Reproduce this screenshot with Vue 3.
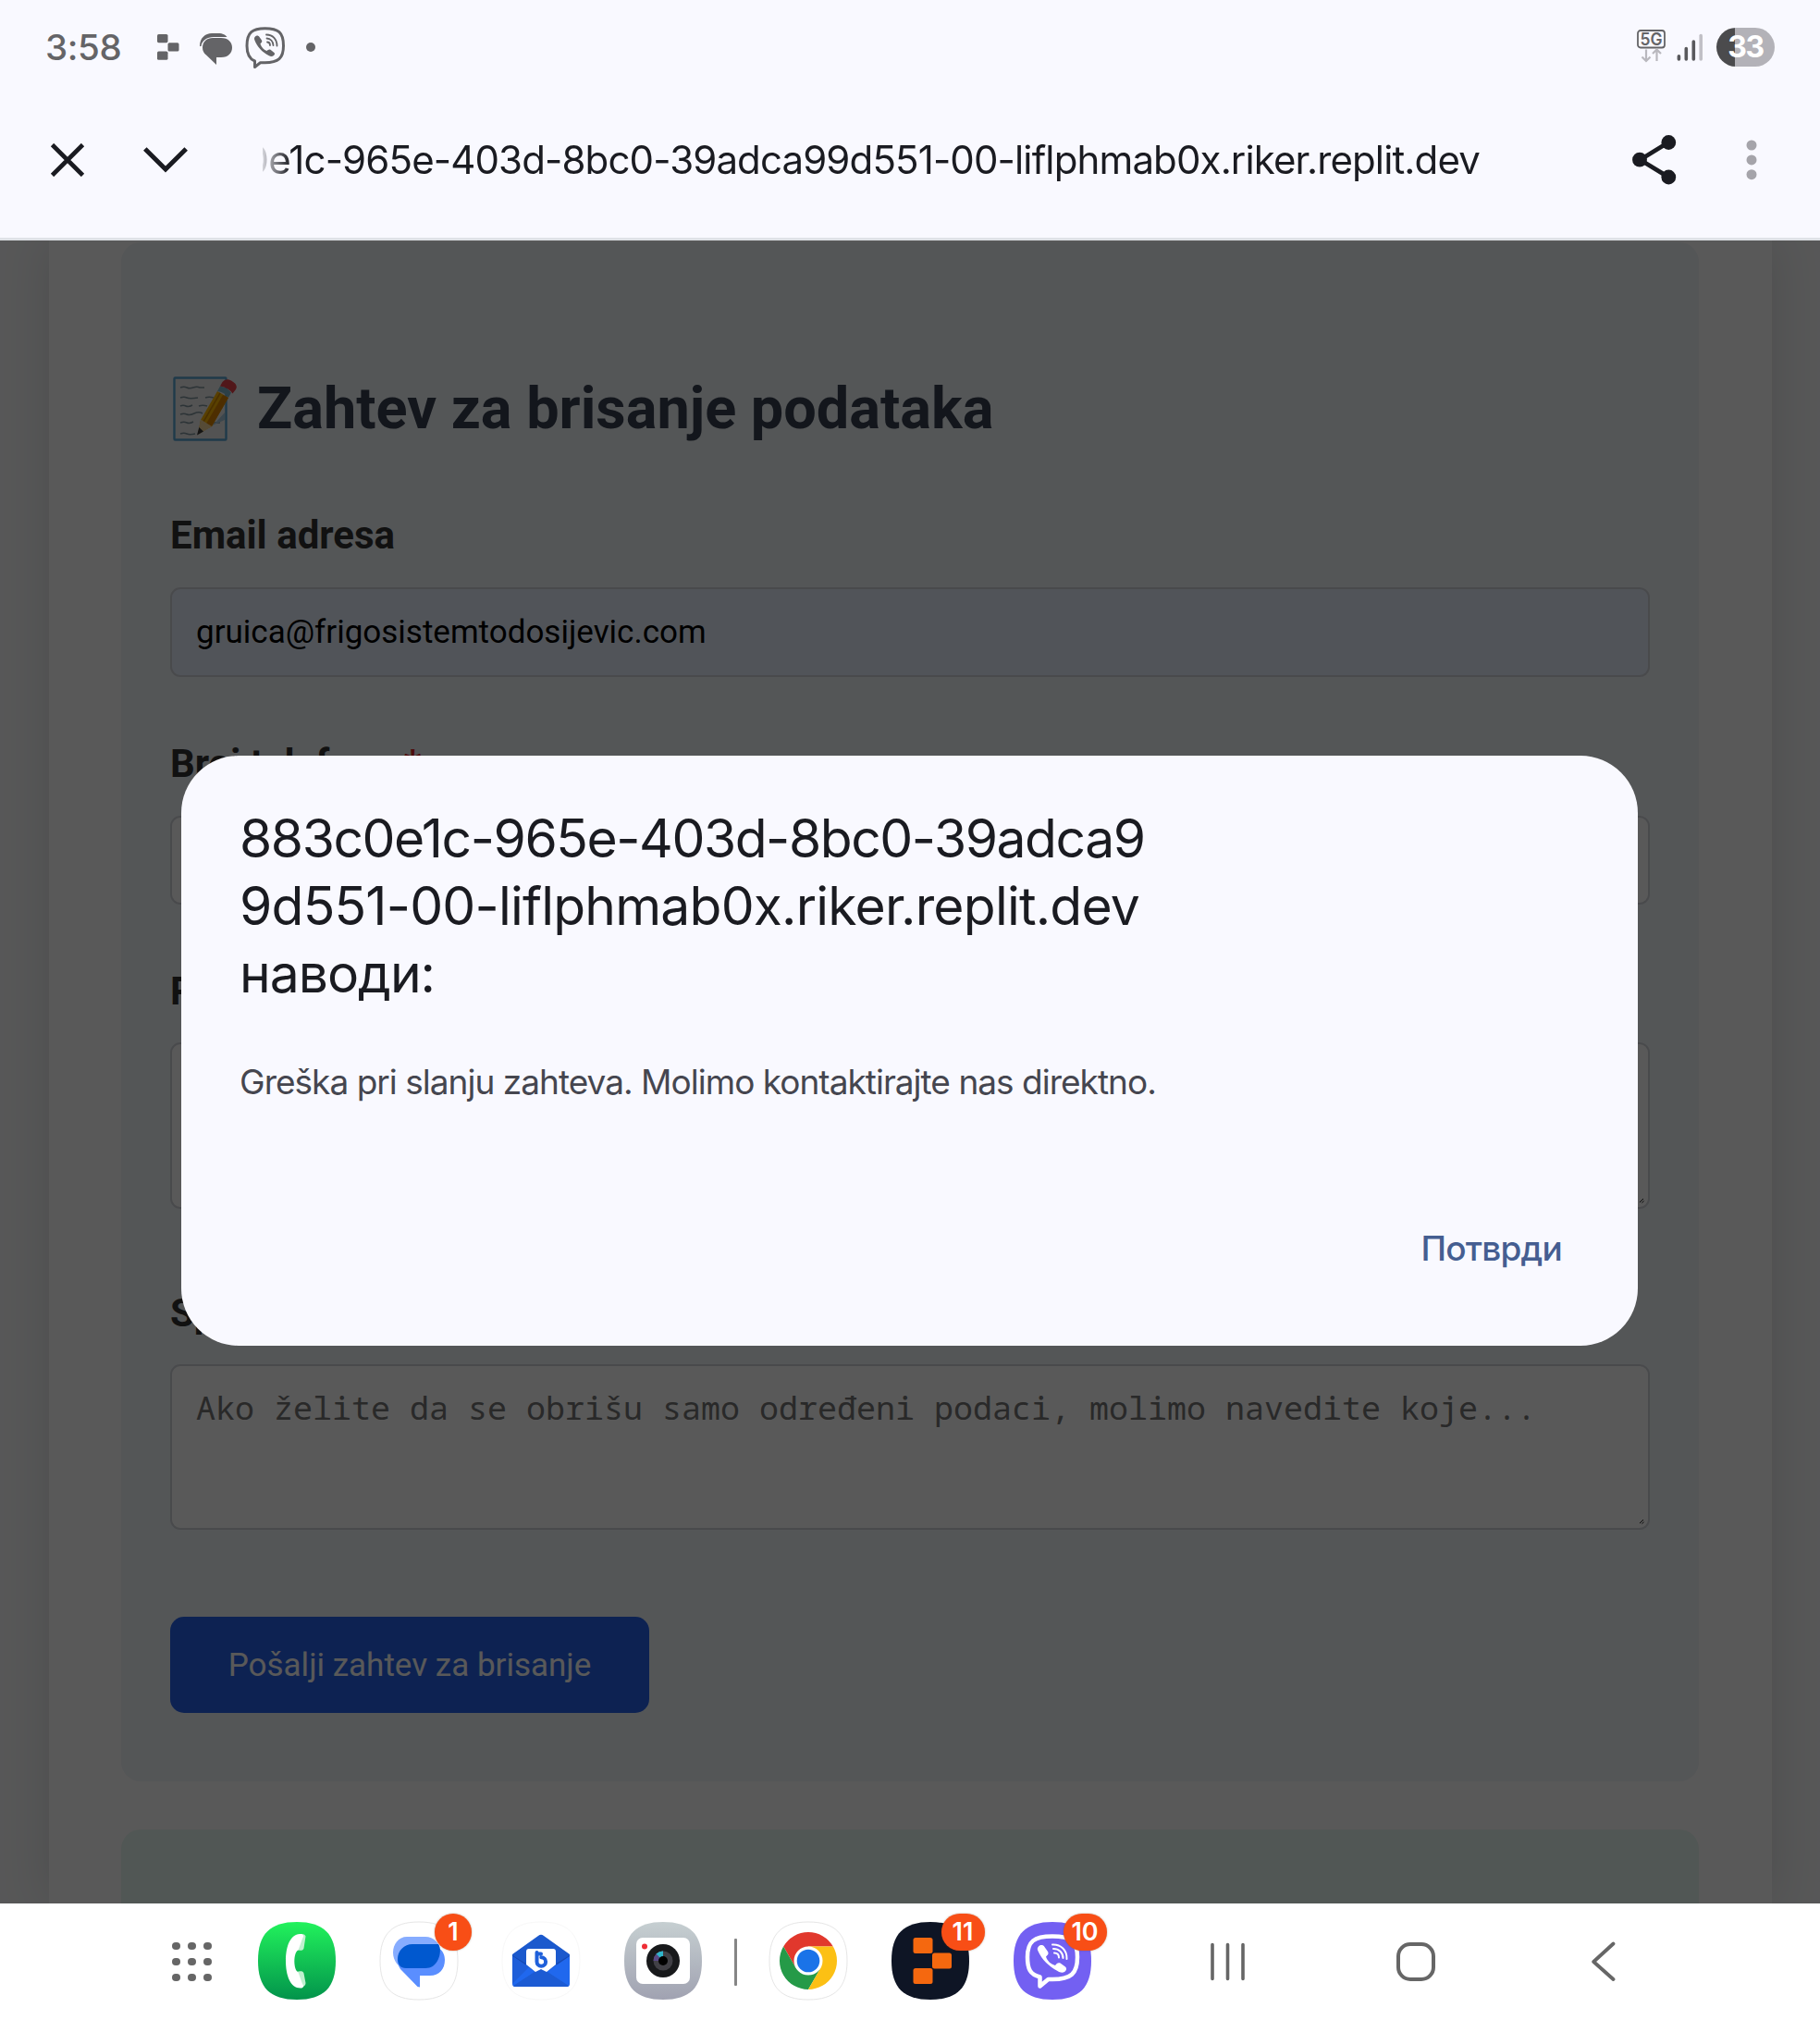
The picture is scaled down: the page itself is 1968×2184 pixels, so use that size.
<script setup>
const squircle = 'M42 0C71 0 84 13 84 42S71 84 42 84 0 71 0 42 13 0 42 0Z'
const dots = [0, 1, 2, 3, 4, 5, 6, 7, 8]
</script>

<template>
  <div class="screen">
    <header class="top">
      <div class="status">
        <span class="clock">3:58</span>
        <svg class="s-replit" width="24" height="28" viewBox="0 0 24 28" fill="#646467">
          <rect x="0" y="0" width="11.5" height="9.2" rx="1.6" />
          <rect x="11.5" y="9.2" width="12" height="9.4" rx="1.6" />
          <rect x="0" y="18.6" width="11.5" height="9.2" rx="1.6" />
        </svg>
        <svg class="s-chat" width="36" height="35" viewBox="0 0 36 35">
          <path d="M0 14C0 5 6 0 13 0H20C25 0 28 2 29.5 4H15C8 4 2 8 1.5 14Z" fill="#646467" />
          <path d="M14 5H23C31 5 35 10 35 15.5S31 26 23 26H18V34L7 23.5C4.500 21.500 3 19 3 15.500 3 9 8 5 14 5Z" fill="#646467" />
        </svg>
        <svg class="s-viber" width="44" height="45" viewBox="0 0 44 45" fill="none" stroke="#646467">
          <path d="M21.500 1.800C8 1.800 2 6 2 20.500 2 29 4 34.500 10.500 37V43.500L16.500 38.800H21.500C36 38.800 41.500 34 41.500 20.500 41.500 6 36 1.800 21.500 1.800Z" stroke-width="3" stroke-linejoin="round" />
          <path d="M11 10.500C12.500 9 14.500 9.500 15.500 11L18 14.500C19 16.500 17 17.500 16.500 18.500 17.500 22 20.500 25 23.500 26 24.500 25 26 24 27.500 24.800L31.500 28C32.500 29 32 30 31 31 29 32.500 27.500 32 25.500 31 18.500 27.500 12.500 21 10.200 14 9.800 12.500 10 11.500 11 10.500Z" fill="#646467" stroke="none" />
          <path d="M23 8.500C30 8.500 34.500 13.500 34.500 20.500M23.500 12.500C27.500 12.500 30.500 16 30.500 20M24 16.500C26 16.500 27 18 27 20" stroke-width="1.800" stroke-linecap="round" />
        </svg>
        <i class="s-dot"></i>
        <svg class="s-5g" width="32" height="36" viewBox="0 0 32 36">
          <rect x="1" y="1" width="29" height="18.500" rx="3" fill="none" stroke="#646467" stroke-width="1.800" />
          <text x="15.600" y="16.700" text-anchor="middle" textLength="24" lengthAdjust="spacingAndGlyphs" class="g5">5G</text>
          <path d="M10 21.500V34M5.500 29.500L10 34 14.500 29.500M21.500 34V21.500M17 26L21.500 21.500 26 26" fill="none" stroke="#b9b8be" stroke-width="2.200" />
        </svg>
        <svg class="s-signal" width="30" height="31" viewBox="0 0 30 31" stroke-width="3.600" stroke-linecap="round">
          <path d="M2.400 24.800V28M10.300 16.500V28M18.300 9V28" stroke="#59595c" />
          <path d="M26.200 2.500V28" stroke="#c1c0c6" />
        </svg>
        <span class="battery">33</span>
      </div>
      <div class="toolbar">
        <svg class="t-close" width="38" height="36" viewBox="0 0 38 36"><path d="M2.500 1.500L35.500 34.500M35.500 1.500L2.500 34.500" stroke="#1a1b21" stroke-width="4.700" /></svg>
        <svg class="t-down" width="48" height="28" viewBox="0 0 48 28"><path d="M1.800 2L24 24 46.200 2" fill="none" stroke="#1a1b21" stroke-width="5" /></svg>
        <div class="url"><span>0e1c-965e-403d-8bc0-39adca99d551-00-liflphmab0x.riker.replit.dev</span></div>
        <svg class="t-share" width="48" height="54" viewBox="0 0 48 54" fill="#1a1b21">
          <path d="M39 8L8.500 26.700 39 45.400" fill="none" stroke="#1a1b21" stroke-width="4.800" />
          <circle cx="39.300" cy="8" r="7.900" /><circle cx="8" cy="26.700" r="7.900" /><circle cx="39.300" cy="45.500" r="7.900" />
        </svg>
        <svg class="t-more" width="12" height="44" viewBox="0 0 12 44" fill="#a5a4aa">
          <circle cx="6" cy="6" r="5.500" /><circle cx="6" cy="21.900" r="5.500" /><circle cx="6" cy="37.700" r="5.500" />
        </svg>
      </div>
    </header>

    <main class="viewport">
      <div class="container">
        <section class="card">
          <h2>
            <svg width="72" height="74" viewBox="0 0 72 74">
              <rect x="4.500" y="3.500" width="56" height="67" rx="1" fill="#ededed" stroke="#5ba7d4" stroke-width="2.400" />
              <path d="M11 14q4-1.500 7 0t7 0 7 0h5M11 25q4-1.500 7 0t12 0M38 25q4-1.500 9 0M11 34q3-1.500 6 0t7-1M31 34q4-1.500 9 0M11 43q4-1.500 7 0t8-1 9 0M11 52q4-1.500 7 0t7-1M47 52h7M11 64q4-1.500 7 0t9 0" fill="none" stroke="#82969f" stroke-width="1.600" />
              <path d="M32 61L59 49V41L49 52Z" fill="#a9c9dc" />
              <path d="M30 64L33 49 51 18 63 25 45 56Z" fill="#ffb803" />
              <path d="M39 53L57 22 63 25 45 56Z" fill="#dc8500" />
              <path d="M36 51L54 20" stroke="#d48a00" stroke-width="1.500" />
              <path d="M33 48.500L45 56 30 65Z" fill="#f7d89c" />
              <path d="M31.300 57L36 61.500 29 65.500Z" fill="#3a3a3a" />
              <path d="M51 18L54 12.500Q62 14 66 19.500L63 25Q59 19 51 18Z" fill="#7fb7cb" />
              <path d="M54 12.500L56.500 8Q60 3.500 66 6.500 74 11 71 16L67.500 20.500Q63 14 54 12.500Z" fill="#e8434a" />
            </svg>
            <span>Zahtev za brisanje podataka</span>
          </h2>
          <div class="field">
            <label>Email adresa</label>
            <div class="input filled">gruica@frigosistemtodosijevic.com</div>
          </div>
          <div class="field">
            <label>Broj telefona <em>*</em></label>
            <div class="input"></div>
          </div>
          <div class="field area">
            <label>Razlog</label>
            <div class="textarea"><svg width="5" height="5" viewBox="0 0 5 5"><path d="M0 4L4 0M2.500 4.500L4.500 2.500" stroke="#222" /></svg></div>
          </div>
          <div class="field area">
            <label>Specifični podaci</label>
            <div class="textarea">Ako želite da se obrišu samo određeni podaci, molimo navedite koje...<svg width="5" height="5" viewBox="0 0 5 5"><path d="M0 4L4 0M2.500 4.500L4.500 2.500" stroke="#222" /></svg></div>
          </div>
          <button class="submit">Pošalji zahtev za brisanje</button>
        </section>
        <section class="card green"></section>
      </div>
      <div class="scrim"></div>
      <div class="dialog">
        <h1><span class="l1">883c0e1c-965e-403d-8bc0-39adca9</span><span class="l2">9d551-00-liflphmab0x.riker.replit.dev</span><span class="l3">наводи:</span></h1>
        <p>Greška pri slanju zahteva. Molimo kontaktirajte nas direktno.</p>
        <div class="actions"><button>Потврди</button></div>
      </div>
    </main>

    <nav class="dock">
      <div class="grid9"><i v-for="d in dots" :key="d"></i></div>
      <div class="app phone">
        <svg width="84" height="84" viewBox="0 0 84 84">
          <defs><linearGradient id="gp" x1="0" y1="0" x2="0" y2="1"><stop offset="0" stop-color="#22f25c" /><stop offset="1" stop-color="#02934b" /></linearGradient></defs>
          <path :d="squircle" fill="url(#gp)" />
          <path d="M39 30.500L42 14.500C43 12.500 51 12 51.500 15.500L49.500 28.500C49 31 46 31 44 30.500ZM39 54L44 53.500C46 53 49 53 49.500 55.500L51.500 66C51.500 71 43 72 42 69.500Z" fill="#c0f0d0" />
          <path d="M46 13C35 13 30 26 30 42S35 71.500 46 71.500C49 71.500 50 69.500 48 67L43.500 54.500C38 52 38 32.500 43.500 30.500L48 18C50 15 49 13 46 13Z" fill="#fff" />
        </svg>
      </div>
      <div class="app messages">
        <svg width="84" height="84" viewBox="0 0 84 84">
          <path :d="squircle" fill="#fff" stroke="#e6e6e6" />
          <path d="M29 16H49C58 16 65 23 65 32S58 50 49 50H28C20 50 14 42 14 33S20 16 29 16Z" fill="#86acff" />
          <path d="M63 28C68 31 70 36 70 41 70 51 64 58 54 58H43V70.500L40.500 70L22 51C19 47 18.500 42 19 38Z" fill="#5a8eff" />
          <path d="M35 24H63C66 28 65 36 63 40 60 47 55 50 49 50H28C22 50 19 46 19 40 19 31 26 24 35 24Z" fill="#0058cf" />
        </svg>
        <b class="badge round">1</b>
      </div>
      <div class="app mail">
        <svg width="84" height="84" viewBox="0 0 84 84">
          <path :d="squircle" fill="#fff" stroke="#f8f8f8" />
          <path d="M11 35L39 15Q42 12.500 45 15L73 35V55H11Z" fill="#1b59cd" />
          <path d="M11 36L26 45 11 62ZM73 36L58 45 73 62Z" fill="#164ab4" />
          <path d="M11 37L42 58 73 37V67Q73 70 70 70H14Q11 70 11 67Z" fill="#2068ee" />
          <path d="M11 37V67L29 49Z" fill="#1e5ed9" />
          <path d="M12 69L38 52Q42 50 46 52L72 69Q71 70 70 70H14Q13 70 12 69Z" fill="#1c5bd3" />
          <path d="M29 29H55Q58 29 58 32V46L48 54 42 51 36 54 26 46V32Q26 29 29 29Z" fill="#fff" />
          <path d="M37.500 33V43M42 34.500H38M37.500 43A4.800 4.800 0 1 0 42.300 38.200" fill="none" stroke="#1f60da" stroke-width="4" stroke-linecap="round" />
        </svg>
      </div>
      <div class="app camera">
        <svg width="84" height="84" viewBox="0 0 84 84">
          <defs><linearGradient id="gc" x1="0" y1="0" x2="0" y2="1"><stop offset="0" stop-color="#c6cfd1" /><stop offset="1" stop-color="#a0a2b1" /></linearGradient></defs>
          <path :d="squircle" fill="url(#gc)" />
          <rect x="13" y="17" width="58" height="50" rx="7" fill="#fff" />
          <circle cx="22" cy="26.500" r="3" fill="#ee2d35" />
          <circle cx="42" cy="42" r="18" fill="#18191b" />
          <circle cx="42" cy="42" r="10.500" fill="#414046" />
          <path d="M42 42H31.500A10.500 10.500 0 0 1 42 31.500Z" fill="#5a4a86" />
          <path d="M42 42L34.600 34.600A10.500 10.500 0 0 1 42 31.500Z" fill="#2fb6cb" />
          <circle cx="42" cy="42" r="5" fill="#000" />
        </svg>
      </div>
      <i class="divider"></i>
      <div class="app chrome">
        <svg width="84" height="84" viewBox="-42 -42 84 84">
          <path :d="squircle" transform="translate(-42 -42)" fill="#fff" stroke="#e6e6e6" />
          <path d="M-26.850 -15.500A31 31 0 0 1 26.850 -15.500H0L-13.420 7.750Z" fill="#e1382d" />
          <path d="M-26.850 -15.500A31 31 0 0 0 0 31L13.420 7.750H-13.420Z" fill="#259a48" />
          <path d="M26.850 -15.500A31 31 0 0 1 0 31L13.420 7.750 0 -15.500Z" fill="#fcc014" />
          <circle r="15.500" fill="#fff" /><circle r="12.300" fill="#1a73e8" />
        </svg>
      </div>
      <div class="app replit">
        <svg width="84" height="84" viewBox="0 0 84 84">
          <path :d="squircle" fill="#0e1525" />
          <g fill="#f5680f"><rect x="23.500" y="17" width="21" height="17" rx="2.500" /><rect x="44" y="33.500" width="21" height="17" rx="2.500" /><rect x="23.500" y="50" width="21" height="17" rx="2.500" /></g>
        </svg>
        <b class="badge">11</b>
      </div>
      <div class="app viber">
        <svg width="84" height="84" viewBox="0 0 84 84" fill="none" stroke="#fff">
          <path :d="squircle" fill="#7360f2" stroke="none" />
          <path d="M42 15.500C22 15.500 15 21 15 38 15 51 18 57 28.500 59.500V69.500L37.500 62H42C62 62 69 56 69 38 69 21 62 15.500 42 15.500Z" stroke-width="4.500" stroke-linejoin="round" />
          <path d="M27 26.500C29 24.500 32 24.500 33.500 27L37 32C38.500 34.500 36.500 36 35 37.500 36.500 42 40 45.500 45 47 46.500 45 48 43.500 50.500 44.500L56 48.500C58 50.500 57 52.500 55 54 52.500 55.500 50 54.500 47.500 53 38 48 30.500 40.500 26.500 31.500 25.500 29.500 25.500 28 27 26.500Z" fill="#fff" stroke="none" />
          <path d="M42 24.500C51 24 58 30.500 57.500 40M43 29C49 29 53.500 33 53.500 39M44 33.500C47 33.500 49 35.500 49 38.500" stroke-width="2" stroke-linecap="round" />
        </svg>
        <b class="badge">10</b>
      </div>
      <svg class="recents" width="40" height="42" viewBox="0 0 40 42"><path d="M3 2.500V39.500M19.500 2.500V39.500M36 2.500V39.500" stroke="#666" stroke-width="3.600" stroke-linecap="round" /></svg>
      <i class="home"></i>
      <svg class="back" width="28" height="44" viewBox="0 0 28 44"><path d="M24.500 2.500L3.200 22 24.500 41" fill="none" stroke="#666" stroke-width="3.800" stroke-linecap="round" stroke-linejoin="round" /></svg>
    </nav>
  </div>
</template>

<style>
body { margin: 0; }
</style>

<style scoped>
* { box-sizing: border-box; }
svg { display: block; flex: none; }
.screen { width: 1968px; height: 2184px; display: flex; flex-direction: column; overflow: hidden; font-family: Roboto, sans-serif; }
.top { height: 260px; background: #f9f9ff; border-bottom: 3px solid #dfe2e7; font-family: Inter, sans-serif; flex: none; }
.status { height: 102px; padding-left: 49px; display: flex; align-items: center; }
.clock { width: 121px; font-size: 38.5px; font-weight: 500; color: #646467; letter-spacing: -.4px; }
.s-chat { margin-left: 22px; margin-top: 4px; }
.s-viber { margin-left: 13px; }
.s-dot { width: 10px; height: 10px; border-radius: 50%; background: #646467; margin-left: 22px; }
.s-5g { margin-left: auto; margin-top: -2px; }
.g5 { font: 600 19px Inter, sans-serif; fill: #646467; }
.s-signal { margin-left: 11px; }
.battery { width: 63px; height: 42px; margin: 0 49px 0 13px; border-radius: 21px; background: linear-gradient(90deg, #4b4b4d 20px, #b3b2b8 20px); color: #fff; font-weight: 700; font-size: 32px; line-height: 42px; text-align: center; letter-spacing: -1.5px; }
.toolbar { height: 142px; display: flex; align-items: center; padding: 0 68px 0 54px; }
.t-close, .t-down, .t-share, .t-more { margin-bottom: 1px; }
.t-down { margin-left: 63px; }
.url { margin-left: 81px; width: 1330px; height: 70px; display: flex; overflow: hidden; -webkit-mask-image: linear-gradient(90deg, transparent -6px, #000 30px); mask-image: linear-gradient(90deg, transparent -6px, #000 30px); }
.url span { margin-left: -19.500px; font-size: 42px; line-height: 70px; color: #1a1b21; white-space: nowrap; letter-spacing: -.87px; }
.t-share { margin-left: auto; }
.t-more { margin-left: 75px; }

.viewport { position: relative; height: 1798px; flex: none; overflow: hidden; background: #f9fafb; padding: 0 52px 0 53px; }
.container { height: 1798px; background: #fff; box-shadow: 0 0 52px rgba(0, 0, 0, .12); padding: 2px 79px 0 78px; }
.card { height: 1664px; background: #f1f5f9; border-radius: 21px; padding: 143px 53px 0 53px; }
.card.green { margin-top: 52px; height: 300px; background: #e8f8f2; }
h2 { margin: 0 0 70px; height: 74px; display: flex; font-size: 63px; line-height: 74px; font-weight: 700; color: #374151; }
h2 span { margin-left: 22px; white-space: nowrap; }
.field { height: 246.5px; }
.field.area { height: 347.5px; }
label { display: block; font-size: 42px; line-height: 60px; font-weight: 700; color: #333; margin-bottom: 26px; }
.area label { margin-bottom: 25px; }
label em { font-style: normal; color: #dc2626; }
.input { height: 96.5px; border: 2px solid #d1d5db; border-radius: 11px; background: #fff; padding-left: 26px; line-height: 93px; font-size: 35px; color: #000; }
.input.filled { background: #e8f0fe; }
.textarea { display: flex; height: 179.5px; border: 2px solid #d1d5db; border-radius: 11px; background: #fff; padding: 24px 4px 4px 26px; font: 35px/42px "Noto Sans Mono", "DejaVu Sans Mono", monospace; color: #757575; white-space: nowrap; }
.textarea svg { margin: auto 0 0 auto; }
.submit { display: block; margin-top: 11px; width: 518px; height: 104px; border: 0; border-radius: 15px; background: #2563eb; color: #fff; font: 35px Roboto, sans-serif; }
.scrim { position: absolute; inset: 0; background: rgba(0, 0, 0, .65); }
.dialog { position: absolute; left: 196px; top: 557px; width: 1575px; height: 638px; border-radius: 62px; background: #f9f9ff; padding: 53px 82px 0 63px; font-family: Inter, sans-serif; color: #1a1b21; }
.dialog h1 { margin: 0; font-size: 57px; line-height: 73px; font-weight: 400; }
.dialog h1 span { display: block; white-space: nowrap; }
.l1 { letter-spacing: -1.45px; }
.l2 { letter-spacing: -.8px; }
.l3 { letter-spacing: -1px; }
.dialog p { margin: 54px 0 0; font-size: 37px; line-height: 53px; letter-spacing: -.98px; color: #45464f; white-space: nowrap; }
.actions { display: flex; justify-content: flex-end; margin-top: 127px; }
.actions button { border: 0; padding: 0; background: none; font: 500 37px/53px Inter, sans-serif; letter-spacing: -.8px; color: #455e91; }

.dock { height: 126px; background: #fff; display: flex; align-items: center; flex: none; }
.grid9 { margin-left: 186px; width: 43px; display: grid; grid-template-columns: repeat(3, 8.500px); gap: 8.700px; }
.grid9 i { width: 8.500px; height: 8.500px; border-radius: 50%; background: #666; }
.app { position: relative; width: 84px; height: 84px; margin-right: 48px; margin-top: -2px; }
.app svg { overflow: visible; }
.phone { margin-left: 50px; }
.camera { margin-right: 0; }
.badge { position: absolute; left: 54px; top: -9px; width: 47px; height: 40px; border-radius: 20px; background: #f84e16; color: #fff; font: 600 27px/40px Inter, sans-serif; text-align: center; box-shadow: 0 0 2px rgba(120, 60, 20, .5); }
.badge.round { left: 59px; width: 40px; }
.divider { width: 2.500px; height: 51px; background: #858585; border-radius: 1px; margin: 0 35px 0 35px; }
.recents { margin-left: 80px; }
.home { width: 42px; height: 42px; border: 4px solid #666; border-radius: 15px; margin-left: 162px; }
.back { margin-left: 168px; }
</style>
